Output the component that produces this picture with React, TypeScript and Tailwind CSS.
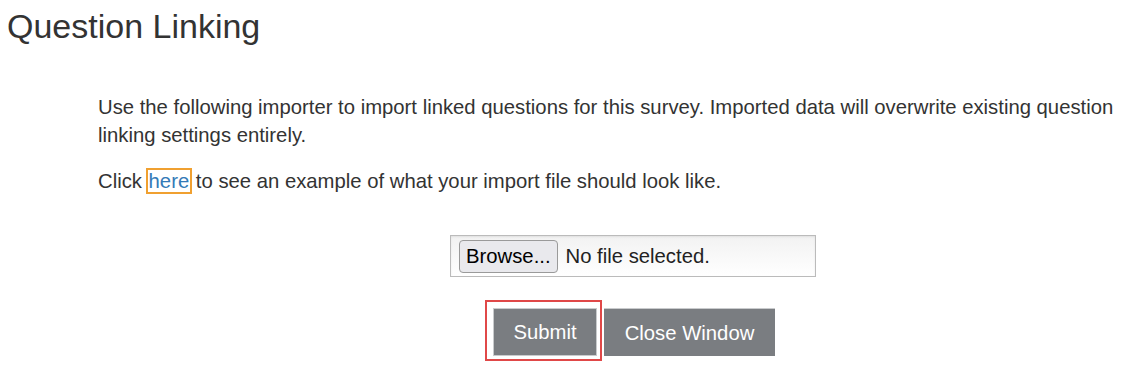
export default function App() {
  return (
    <div className="min-h-[372px] w-[1143px] overflow-hidden bg-white font-['Liberation_Sans',Arial,sans-serif] text-[#333]">
      <h1 className="ml-[7px] mt-[8px] text-[34px] leading-[1.1] font-normal">Question Linking</h1>

      <div className="ml-[98px] mt-[48px] w-[1070px]">
        <div className="w-[1040px] text-[20.3px] leading-[28px]">
          <p>
            Use the following importer to import linked questions for this survey. Imported data will overwrite existing
            question linking settings entirely.
          </p>
          <p className="mt-[18px]">
            Click{" "}
            <a href="#" className="px-[1px] outline-2 outline-[#f0a030] text-[#337ab7]">
              here
            </a>{" "}
            to see an example of what your import file should look like.
          </p>
        </div>

        <div className="mt-[40px] flex justify-center">
          <div className="flex h-[42px] w-[366px] items-center gap-[8px] border border-[#bbb] bg-gradient-to-b from-[#f2f2f2] to-white px-[8px] shadow-[inset_0_1px_2px_rgba(0,0,0,0.08)]">
            <button className="h-[33px] rounded-[4px] border border-[#9a9a9a] bg-[#e9e9ed] px-[6px] text-[20.3px] text-black">
              Browse...
            </button>
            <span className="text-[20.3px] text-[#222]">No file selected.</span>
          </div>
        </div>

        <div className="mt-[23px] flex justify-center">
          <div className="mr-[6px] flex items-start">
            <div className="border-2 border-[#e04848] pt-[6px] pl-[6px] pr-[3px] pb-[3px]">
              <button className="h-[48px] w-[104px] border border-[#c9cbcd] bg-[#7a7d81] text-[20.3px] text-white">
                Submit
              </button>
            </div>
            <button className="ml-[2px] mt-[8px] h-[48px] w-[171px] border-t border-[#c9cbcd] bg-[#7a7d81] text-[20.3px] text-white">
              Close Window
            </button>
          </div>
        </div>
      </div>
    </div>
  );
}
